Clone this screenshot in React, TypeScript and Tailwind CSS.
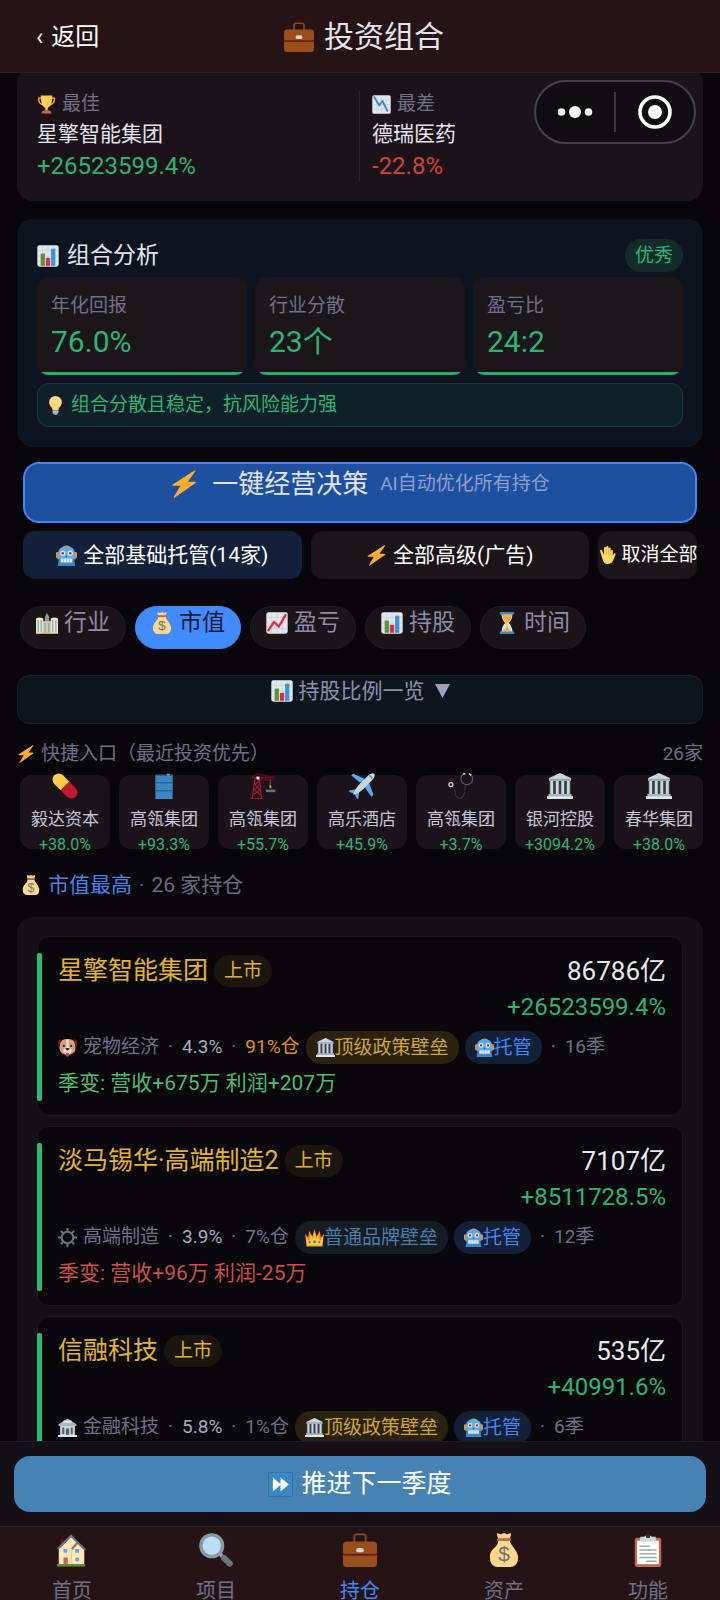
import React from "react";

type IconName =
  | "briefcase" | "trophy" | "chartDown" | "chartUp" | "barChart" | "bulb" | "bolt" | "robot" | "hand"
  | "city" | "moneyBag" | "hourglass" | "pill" | "barrel" | "crane" | "plane" | "stethoscope" | "bank"
  | "dog" | "gear" | "bankSmall" | "crown" | "forward" | "house" | "search" | "clipboard";

const grid = (
  <>
    <rect x="0.5" y="0.5" width="35" height="35" rx="3.5" fill="#e1e8ed" />
    <path d="M9 1v34M18 1v34M27 1v34M1 9h34M1 18h34M1 27h34" stroke="#bfccd4" strokeWidth="1" />
  </>
);

const art: Record<IconName, React.ReactNode> = {
  briefcase: (
    <>
      <path d="M12 10V4a2.500 2.500 0 0 1 2.500-2.500h7A2.500 2.500 0 0 1 24 4v6" fill="none" stroke="#8a4b1c" strokeWidth="2" />
      <rect x="0" y="9" width="36" height="27" rx="4" fill="#9a4e1c" />
      <path d="M0 20v2.500q0 1.500 3 1.500h30q3 0 3-1.500V20q0 2-3 2H3q-3 0-3-2z" fill="#662113" />
      <rect x="14" y="16" width="8" height="4.500" rx="2" fill="#d9d6cf" />
    </>
  ),
  trophy: (
    <>
      <path d="M9 6H3Q2 16 12 19M27 6h6q1 10-9 13" fill="none" stroke="#ffac33" strokeWidth="2.600" />
      <path d="M7 1h22q0 20-8 23-1 1-1 5h-4q0-4-1-5Q7 21 7 1z" fill="#ffcc4d" />
      <path d="M11 3h3q0 12 3 18-6-5-6-18z" fill="#ffe08a" />
      <path d="M11 30q7-3 14 0l3 5H8z" fill="#c1694f" />
    </>
  ),
  chartDown: (
    <>
      {grid}
      <path d="M4 4l10 16 6-9 9 19" fill="none" stroke="#3b88c3" strokeWidth="3.500" strokeLinejoin="round" strokeLinecap="round" />
    </>
  ),
  chartUp: (
    <>
      {grid}
      <path d="M4 30l9-14 8 8L32 5" fill="none" stroke="#dd2e44" strokeWidth="3.800" strokeLinejoin="round" strokeLinecap="round" />
    </>
  ),
  barChart: (
    <>
      {grid}
      <rect x="6" y="14" width="7" height="20" fill="#5c913b" />
      <rect x="14.500" y="21" width="7" height="13" fill="#dd2e44" />
      <rect x="23" y="6" width="7" height="28" fill="#3b94d9" />
    </>
  ),
  bulb: (
    <>
      <path d="M18 0a12 12 0 0 0-12 12c0 7 6 9 6.500 15h11c.5-6 6.500-8 6.500-15A12 12 0 0 0 18 0z" fill="#ffd983" />
      <path d="M15 26l-2-11 5 3 5-3-2 11" fill="none" stroke="#ffcc4d" strokeWidth="1.500" />
      <path d="M12.500 27h11v5q-2 4-5.500 4t-5.500-4z" fill="#99aab5" />
      <path d="M12.500 30h11" stroke="#ccd6dd" strokeWidth="1.500" />
    </>
  ),
  bolt: <path d="M31.500 .5L3.500 18.500q-1.800 1.800 1 1.800h9L5 34.500q-.6 1.800 1.200.8L32.500 17q1.800-1.900-1-1.900h-8.500L32.500 1.500q.4-1.700-1-1z" fill="#ffac33" />,
  robot: (
    <>
      <rect x="0" y="12" width="5" height="11" rx="2" fill="#f4900c" />
      <rect x="31" y="12" width="5" height="11" rx="2" fill="#f4900c" />
      <path d="M9 5q9-8 18 0z" fill="#f4900c" />
      <path d="M4 12Q5 3 18 3t14 9l1 13H3z" fill="#55acee" />
      <path d="M5 24h26l2 12H3z" fill="#3b88c3" />
      <circle cx="11.500" cy="14" r="4.500" fill="#e1e8ed" />
      <circle cx="24.500" cy="14" r="4.500" fill="#e1e8ed" />
      <circle cx="11.500" cy="14" r="2.200" fill="#be1931" />
      <circle cx="24.500" cy="14" r="2.200" fill="#be1931" />
      <path d="M16 21l2-3 2 3z" fill="#226699" />
      <rect x="8" y="23" width="20" height="7" rx="1" fill="#e1e8ed" />
      <path d="M13 23v7M18 23v7M23 23v7" stroke="#99aab5" strokeWidth="1" />
    </>
  ),
  hand: (
    <>
      <path d="M4 9.500q0-2 2-2t2.500 2L12 19V4q0-2.200 2.200-2.200T16.400 4V2.500Q16.400 0 18.800 0t2.300 2.500V5q.2-2 2.200-2t2.200 2.200V10q.2-1.800 2-1.800t2.200 2.300V20l1-3q1-3 3.500-2.500 1.500.5.8 3L31 27q-3 9-12 9-8 0-10-10z" fill="#ffdc5d" />
      <path d="M16.500 5v12M21 5v12M25.500 9v9" stroke="#ef9645" strokeWidth="1.200" />
    </>
  ),
  city: (
    <>
      <path d="M14.500 35V9q0-3 2-4l1-3h1l1 3q2 1 2 4v26z" fill="#8899a6" />
      <path d="M0 35V12q0-3 6-3t6 3v23zM24 35V12q0-3 6-3t6 3v23z" fill="#ffe8b6" />
      <rect x="11" y="15" width="14" height="20" fill="#e0c79c" />
      <path d="M3.500 13v20M8.500 13v20M27.500 13v20M32.500 13v20M15 18v15M21 18v15" stroke="#55acee" strokeWidth="2" />
      <path d="M0 35h36" stroke="#c9a67a" strokeWidth="2" />
    </>
  ),
  moneyBag: (
    <>
      <path d="M11 0l3.500 1.500L18 0l3.500 1.500L25 0q1 2-1 6H12q-2-4-1-6zM12 8h12q1 4 4.500 8t4.500 9q0 11-8 11H11q-8 0-8-11 0-5 4.500-9T12 8z" fill="#fdd888" />
      <rect x="10.500" y="5.500" width="15" height="2.600" rx="1.300" fill="#bf6952" />
      <text x="18" y="30" textAnchor="middle" fontFamily="Liberation Sans, sans-serif" fontSize="22" fontWeight="400" fill="#67757f">$</text>
    </>
  ),
  hourglass: (
    <>
      <path d="M9 3h18q0 9-6 15 6 6 6 15H9q0-9 6-15Q9 12 9 3z" fill="#dbe7ee" />
      <path d="M10 5h16q-1 8-7 13v6l6 8H11l6-8v-6Q11 13 10 5z" fill="#ffac33" />
      <rect x="6" y="0" width="24" height="4" rx="1.500" fill="#3b88c3" />
      <rect x="6" y="32" width="24" height="4" rx="1.500" fill="#3b88c3" />
    </>
  ),
  pill: (
    <g transform="rotate(45 18 18)">
      <path d="M18 9.500H5.500a8.500 8.500 0 0 0 0 17H18z" fill="#ffcc4d" />
      <path d="M18 9.500h12.500a8.500 8.500 0 0 1 0 17H18z" fill="#be1931" />
    </g>
  ),
  barrel: (
    <>
      <path d="M6 3h24v33H6z" fill="#3b88c3" />
      <path d="M6 3h24M6 13.500h24M6 24.500h24" stroke="#226699" strokeWidth="2" />
      <rect x="22" y="1" width="4" height="2.500" fill="#8899a6" />
    </>
  ),
  crane: (
    <>
      <path d="M3 36L7 7h6l3 29M5 30l9-7M14 30L6 23l7-7M13 23l-6-7 6-6M1 35.500h17" fill="none" stroke="#be1931" strokeWidth="1.400" />
      <path d="M2 6l8-5 24 5H2M12 9.500h22M14 9.500l3-3.500 3 3.500 3-3.500 3 3.500 3-3.500 3 3.500" fill="none" stroke="#a0041e" strokeWidth="1" />
      <path d="M28 9v12" stroke="#66757f" strokeWidth="1" />
      <rect x="27" y="17" width="2.500" height="4" fill="#f4900c" />
      <rect x="22" y="23" width="13" height="3.500" fill="#66757f" />
      <rect x="9" y="5" width="4" height="4" fill="#e1e8ed" />
    </>
  ),
  plane: (
    <>
      <path d="M15 13L3 3 6 1l20 9zM22 20l9 13 3-3-8-21z" fill="#55acee" />
      <path d="M9 23l-8 1-1 2 8 3 3 7 2-1 1-8z" fill="#55acee" />
      <path d="M6 30q2-8 9-15L27 3q6-4 8-2 2 2-2 8L21 21q-7 7-15 9z" fill="#ccd6dd" />
      <path d="M28 4q3 0 4 4" fill="none" stroke="#3b88c3" strokeWidth="2" />
    </>
  ),
  stethoscope: (
    <>
      <path d="M4 18q5 1 6 10 1 7 6 7t7-8l1-11" fill="none" stroke="#343b40" strokeWidth="1.500" />
      <path d="M23 1q-5 1-5 7 0 7 7 8 9 0 9-8 0-5-4-7" fill="none" stroke="#55626b" strokeWidth="1.500" />
      <circle cx="4" cy="16" r="2.800" fill="none" stroke="#ccd6dd" strokeWidth="1.800" />
      <path d="M21 1h3M29 1l3 2" stroke="#e1e8ed" strokeWidth="2" />
    </>
  ),
  bank: (
    <>
      <rect x="3" y="10" width="30" height="22" fill="#33404a" />
      <path d="M18 0L33 7v4H3V7z" fill="#ccd6dd" />
      <path d="M3 8h30v3H3z" fill="#99aab5" />
      <path d="M6.500 11v19M14.200 11v19M21.800 11v19M29.500 11v19" stroke="#ccd6dd" strokeWidth="4" />
      <path d="M2 29h32v3H2z" fill="#aab8c2" />
      <path d="M0 32h36v4H0z" fill="#e1e8ed" />
    </>
  ),
  bankSmall: (
    <>
      <path d="M4 13h28v22H4z" fill="#ccd6dd" />
      <path d="M18 1l17 11v3H1v-3z" fill="#aab8c2" />
      <path d="M10 5h16v4H10z" fill="#e1e8ed" />
      <path d="M8 18h4v13H8zM24 18h4v13h-4zM15 20h6v14h-6z" fill="#55636e" />
      <path d="M0 32h36v4H0z" fill="#e1e8ed" />
    </>
  ),
  dog: (
    <>
      <path d="M7 3Q0 1 0 11q0 8 5 11zM29 3q7-2 7 8 0 8-5 11z" fill="#662113" />
      <path d="M4 12Q5 2 18 2t14 10l1 9q-2 11-15 11T3 21z" fill="#d99e82" />
      <path d="M15 3h6l-1 14q6 3 6 9-3 6-8 6t-8-6q0-6 6-9z" fill="#f5d8c3" />
      <circle cx="11" cy="15" r="2.200" fill="#292f33" />
      <circle cx="25" cy="15" r="2.200" fill="#292f33" />
      <path d="M14 19h8q0 3-4 5-4-2-4-5z" fill="#292f33" />
      <path d="M15 29h6v4q-3 5-6 0z" fill="#dd2e44" />
    </>
  ),
  gear: (
    <>
      <circle cx="18" cy="18" r="11" fill="none" stroke="#66757f" strokeWidth="4" />
      <path d="M18 0v6M18 30v6M0 18h6M30 18h6M5.500 5.500l4 4M26.500 26.500l4 4M5.500 30.500l4-4M26.500 9.500l4-4" stroke="#66757f" strokeWidth="4" />
    </>
  ),
  crown: (
    <>
      <path d="M3 34L0 11l6 7L8 5l6 11 4-14 4 14 6-11 2 13 6-7-3 23z" fill="#f4900c" />
      <path d="M4 34L2 17l6 8 3-12 4 9 3-15 3 15 4-9 3 12 6-8-2 17z" fill="#ffcc4d" />
      <circle cx="18" cy="26" r="3" fill="#5c913b" />
      <circle cx="9" cy="27" r="2.200" fill="#9266cc" />
      <circle cx="27" cy="27" r="2.200" fill="#9266cc" />
      <path d="M3 32h30v3H3z" fill="#ffac33" />
    </>
  ),
  forward: (
    <>
      <rect x="0.500" y="0.500" width="35" height="35" rx="3.500" fill="#3b88c3" stroke="#2c6795" />
      <path d="M7 8l12 10L7 28zM18 8l12 10-12 10z" fill="#fff" />
    </>
  ),
  house: (
    <>
      <path d="M6 7h3v9H6z" fill="#a0041e" />
      <path d="M4 17L17 4l7 6 7 7v16H4z" fill="#ffe8b6" />
      <path d="M3 17L17 3l7 7M18 17l6-7 8 8" fill="none" stroke="#66757f" strokeWidth="2.200" />
      <path d="M17.500 18v15" stroke="#ffcc4d" strokeWidth="1" />
      <path d="M9 17h4v4H9zM21.500 17h4v4h-4zM21.500 26h4v4h-4z" fill="#55acee" />
      <rect x="9" y="26" width="4.500" height="7" fill="#c1694f" />
      <rect x="2" y="33" width="30" height="2.500" fill="#5c913b" />
    </>
  ),
  search: (
    <>
      <path d="M22 22l4 4" stroke="#99aab5" strokeWidth="4" />
      <path d="M26.500 26.500l6 6" stroke="#66757f" strokeWidth="6.500" strokeLinecap="round" />
      <circle cx="13.500" cy="13.500" r="11.500" fill="#bbddf5" stroke="#8899a6" strokeWidth="3.600" />
    </>
  ),
  clipboard: (
    <>
      <rect x="4" y="5" width="28" height="31" rx="2.500" fill="#c1694f" />
      <rect x="6.500" y="8" width="23" height="25" fill="#fff" />
      <path d="M10 4h4q1-2 4-2t4 2h4l1 5H9z" fill="#ccd6dd" />
      <circle cx="18" cy="3" r="2.500" fill="#292f33" />
      <path d="M9 14h11M9 18h18M9 22h18M9 26h18M16 30h11" stroke="#99aab5" strokeWidth="1.600" />
    </>
  ),
};

function Icon({ name, className }: { name: IconName; className: string }) {
  return (
    <svg viewBox="0 0 36 36" className={`shrink-0 ${className}`} aria-hidden="true">
      {art[name]}
    </svg>
  );
}

const stats = [
  { label: "年化回报", value: "76.0%" },
  { label: "行业分散", value: "23个" },
  { label: "盈亏比", value: "24:2" },
];

const sorts: { icon: IconName; label: string }[] = [
  { icon: "city", label: "行业" },
  { icon: "moneyBag", label: "市值" },
  { icon: "chartUp", label: "盈亏" },
  { icon: "barChart", label: "持股" },
  { icon: "hourglass", label: "时间" },
];

const quick: { icon: IconName; name: string; change: string }[] = [
  { icon: "pill", name: "毅达资本", change: "+38.0%" },
  { icon: "barrel", name: "高瓴集团", change: "+93.3%" },
  { icon: "crane", name: "高瓴集团", change: "+55.7%" },
  { icon: "plane", name: "高乐酒店", change: "+45.9%" },
  { icon: "stethoscope", name: "高瓴集团", change: "+3.7%" },
  { icon: "bank", name: "银河控股", change: "+3094.2%" },
  { icon: "bank", name: "春华集团", change: "+38.0%" },
];

type Holding = {
  name: string;
  value: string;
  change: string;
  icon: IconName;
  sector: string;
  share: string;
  position: string;
  heavy?: boolean;
  moatIcon: IconName;
  moat: string;
  topMoat: boolean;
  age: string;
  quarter?: string;
  up?: boolean;
};

const holdings: Holding[] = [
  { name: "星擎智能集团", value: "86786亿", change: "+26523599.4%", icon: "dog", sector: "宠物经济", share: "4.3%", position: "91%仓", heavy: true, moatIcon: "bank", moat: "顶级政策壁垒", topMoat: true, age: "16季", quarter: "季变: 营收+675万 利润+207万", up: true },
  { name: "淡马锡华·高端制造2", value: "7107亿", change: "+8511728.5%", icon: "gear", sector: "高端制造", share: "3.9%", position: "7%仓", moatIcon: "crown", moat: "普通品牌壁垒", topMoat: false, age: "12季", quarter: "季变: 营收+96万 利润-25万", up: false },
  { name: "信融科技", value: "535亿", change: "+40991.6%", icon: "bankSmall", sector: "金融科技", share: "5.8%", position: "1%仓", moatIcon: "bank", moat: "顶级政策壁垒", topMoat: true, age: "6季" },
];

const tabs: { icon: IconName; label: string }[] = [
  { icon: "house", label: "首页" },
  { icon: "search", label: "项目" },
  { icon: "briefcase", label: "持仓" },
  { icon: "moneyBag", label: "资产" },
  { icon: "clipboard", label: "功能" },
];

function Dot() {
  return <span className="w-[23px] text-center">·</span>;
}

function HoldingCard({ h }: { h: Holding }) {
  return (
    <li className="relative rounded-xl border border-[#191a25] bg-[#09070c] pt-4 pr-4 pb-3.5 pl-5">
      <span className="absolute top-4 bottom-3.5 -left-px w-[5px] rounded-xs bg-[#27bb77]" />
      <div className="flex items-center gap-1.5 leading-9">
        <h3 className="text-[25px] text-[#e3b52b]">{h.name}</h3>
        <span className="rounded-2xl bg-[#1a160e] px-2.5 text-[19px] leading-8 text-[#e0b42c]">上市</span>
        <span className="ml-auto text-[26px] text-[#e8e8f2]">{h.value}</span>
      </div>
      <p className="text-right text-2xl leading-9 text-[#2bb573]">{h.change}</p>
      <div className="mt-1 flex items-center text-[19px] leading-9 whitespace-nowrap text-[#6f7088]">
        <Icon name={h.icon} className="mr-1.5 size-[19px]" />
        {h.sector}
        <Dot />
        <span className="text-[#a9aac0]">{h.share}</span>
        <Dot />
        <span className={h.heavy ? "text-[#e0912a]" : ""}>{h.position}</span>
        <span className={`ml-1.5 flex items-center rounded-2xl px-2.5 leading-[33px] ${h.topMoat ? "bg-[#2a220f] text-[#d0a732]" : "bg-[#141c24] text-[#4a7fac]"}`}>
          <Icon name={h.moatIcon} className="size-[19px]" />
          {h.moat}
        </span>
        <span className="ml-1.5 flex items-center rounded-2xl bg-[#132038] px-2.5 leading-[33px] text-[#4287f5]">
          <Icon name="robot" className="size-[19px]" />
          托管
        </span>
        <Dot />
        {h.age}
      </div>
      {h.quarter && (
        <p className={`text-[21px] leading-9 ${h.up ? "text-[#4dbd72]" : "text-[#cc4f4d]"}`}>{h.quarter}</p>
      )}
    </li>
  );
}

export default function App() {
  return (
    <div className="relative flex h-dvh flex-col overflow-hidden bg-[#08060b] font-['Roboto','Noto_Sans_CJK_SC',sans-serif] font-normal text-[#e4e4ee]">
      <header className="relative z-10 grid shrink-0 grid-cols-[1fr_auto_1fr] items-center border-b border-[#2a2026] bg-[#261315] pt-[15px] pr-7 pb-[13px] pl-9">
        <button className="flex items-center gap-2 justify-self-start text-2xl leading-11 text-white">
          <span>‹</span>返回
        </button>
        <h1 className="flex items-center gap-2.5 text-[30px] leading-11">
          <Icon name="briefcase" className="size-[30px]" />
          投资组合
        </h1>
      </header>

      <div className="absolute top-20 right-6 z-20 flex h-16 w-[162px] items-center rounded-full border-2 border-[#444245] bg-[#100d10]">
        <button aria-label="更多" className="flex flex-1 justify-center">
          <svg viewBox="0 0 36 12" className="h-3 w-9">
            <circle cx="4.500" cy="6" r="3.800" fill="#fff" />
            <circle cx="18" cy="6" r="6" fill="#fff" />
            <circle cx="31.500" cy="6" r="3.800" fill="#fff" />
          </svg>
        </button>
        <span className="h-10 w-0.5 bg-[#3a383b]" />
        <button aria-label="关闭" className="flex flex-1 justify-center">
          <svg viewBox="0 0 34 34" className="size-[34px]">
            <circle cx="17" cy="17" r="15" fill="none" stroke="#fff" strokeWidth="3.600" />
            <circle cx="17" cy="17" r="7" fill="#fff" />
          </svg>
        </button>
      </div>

      <main className="-mt-1.5 min-h-0 flex-1 overflow-y-auto px-[17px] [scrollbar-width:none]">
        <section className="flex rounded-2xl bg-[#1b1319] px-5 pt-[23px] pb-[19px]">
          <div className="w-1/2 border-r border-[#252330]">
            <p className="flex items-center gap-1.5 text-[19px] leading-7 text-[#6f7088]"><Icon name="trophy" className="size-[19px]" />最佳</p>
            <p className="text-[21px] leading-8">星擎智能集团</p>
            <p className="text-2xl leading-8 text-[#2bb573]">+26523599.4%</p>
          </div>
          <div className="w-1/2 pl-3">
            <p className="flex items-center gap-1.5 text-[19px] leading-7 text-[#6f7088]"><Icon name="chartDown" className="size-[19px]" />最差</p>
            <p className="text-[21px] leading-8">德瑞医药</p>
            <p className="text-2xl leading-8 text-[#d14436]">-22.8%</p>
          </div>
        </section>

        <section className="mt-[18px] rounded-2xl bg-[#0d1420] p-5">
          <div className="flex items-center justify-between">
            <h2 className="flex items-center gap-2 text-[23px] leading-[33px]"><Icon name="barChart" className="size-[22px]" />组合分析</h2>
            <span className="rounded-2xl bg-[#122c2c] px-2.5 text-[19px] leading-[33px] text-[#2bb573]">优秀</span>
          </div>
          <div className="mt-[5px] grid grid-cols-3 gap-2">
            {stats.map((s) => (
              <div key={s.label} className="overflow-hidden rounded-xl bg-[#1b161a]">
                <div className="px-3.5 pt-[13px] pb-2.5">
                  <p className="text-[19px] leading-8 text-[#6f7088]">{s.label}</p>
                  <p className="text-[30px] leading-10 text-[#2bb573]">{s.value}</p>
                </div>
                <div className="h-[3px] bg-[#27ae6c]" />
              </div>
            ))}
          </div>
          <p className="mt-2 flex items-center gap-1.5 rounded-xl border border-[#15403c] bg-[#102028] px-2 text-[19px] leading-[42px] text-[#2bb573]">
            <Icon name="bulb" className="size-[19px]" />组合分散且稳定，抗风险能力强
          </p>
        </section>

        <div className="mt-[15px] px-1.5">
          <button className="flex w-full items-start justify-center rounded-2xl border-2 border-[#4287f5] bg-[#1e50a0] pb-[17px] text-[26px] leading-10">
            <Icon name="bolt" className="mt-1.5 mr-3.5 size-7" />
            一键经营决策
            <span className="ml-3 text-[19px] text-[#8f9fc9]">AI自动优化所有持仓</span>
          </button>
          <div className="mt-2 flex gap-[9px] text-[21px] leading-[48px] text-white">
            <button className="flex min-w-0 flex-1 items-center justify-center gap-1.5 rounded-xl bg-[#132039] whitespace-nowrap"><Icon name="robot" className="size-[21px]" />全部基础托管(14家)</button>
            <button className="flex min-w-0 flex-1 items-center justify-center gap-1.5 rounded-xl bg-[#1b1419] whitespace-nowrap"><Icon name="bolt" className="size-[21px]" />全部高级(广告)</button>
            <button className="flex w-[99px] shrink-0 items-center justify-center gap-1.5 overflow-hidden rounded-xl bg-[#1b1419] text-[19px] whitespace-nowrap"><Icon name="hand" className="size-[18px]" />取消全部</button>
          </div>
        </div>

        <div className="mt-[27px] flex gap-[9px] px-[3px]">
          {sorts.map((s, i) => (
            <button
              key={s.label}
              className={`flex items-center gap-1.5 rounded-full border px-[15px] pb-[9px] text-[23px] leading-8 ${i === 1 ? "border-[#428bff] bg-[#428bff] text-[#101a30]" : "border-[#1f1c26] bg-[#1a1318] text-[#8c8ca6]"}`}
            >
              <Icon name={s.icon} className="size-[22px]" />
              {s.label}
            </button>
          ))}
        </div>

        <button className="mt-[26px] flex w-full items-center justify-center gap-1.5 rounded-xl border border-[#191d28] bg-[#0f151e] pb-[17px] text-[21px] leading-[30px] text-[#9090aa]">
          <Icon name="barChart" className="size-[22px]" />
          持股比例一览
          <svg viewBox="0 0 15 14" className="ml-1 h-3.5 w-[15px]" aria-hidden="true"><path d="M0 0h15L7.500 14z" fill="#a0a0bc" /></svg>
        </button>

        <div className="mt-4 flex items-center justify-between text-[19px] leading-7 text-[#6f7088]">
          <h2 className="flex items-center gap-1.5"><Icon name="bolt" className="size-[18px]" />快捷入口（最近投资优先）</h2>
          <span>26家</span>
        </div>

        <div className="mt-[5px] flex gap-[9px] overflow-hidden pt-0.5 pb-2 pl-[3px]">
          {quick.map((q, i) => (
            <button key={i} className="flex h-[74px] w-[90px] shrink-0 flex-col items-center rounded-xl bg-[#1b1319]">
              <Icon name={q.icon} className="-mt-0.5 size-[26px]" />
              <span className="mt-1.5 text-[17px] leading-7 text-[#c6c6da]">{q.name}</span>
              <span className="text-base leading-6 text-[#2bb573]">{q.change}</span>
            </button>
          ))}
        </div>

        <p className="mt-3 flex items-center gap-[7px] pl-1 text-[21px] leading-8 text-[#6b6b80]">
          <Icon name="moneyBag" className="size-5" />
          <span className="text-[#4285ec]">市值最高</span>
          <span>·</span>
          <span>26 家持仓</span>
        </p>

        <ul className="mt-4 flex flex-col gap-2.5 rounded-2xl bg-[#151016] px-5 pt-[19px] pb-5">
          {holdings.map((h) => <HoldingCard key={h.name} h={h} />)}
        </ul>
      </main>

      <div className="shrink-0 border-t border-[#1d1b28] bg-[#151016] px-3.5 py-3.5">
        <button className="flex w-full items-center justify-center gap-2 rounded-2xl bg-[#4682b4] text-[25px] leading-[56px] text-white">
          <Icon name="forward" className="size-[25px]" />
          推进下一季度
        </button>
      </div>
      <nav className="grid h-[74px] shrink-0 grid-cols-5 overflow-hidden border-t border-[#2a2028] bg-[#261315] pt-1.5">
        {tabs.map((t, i) => (
          <a key={t.label} href="#" className={`flex flex-col items-center gap-2 text-[20px] leading-8 ${i === 2 ? "text-[#4287f5]" : "text-[#6f7088]"}`}>
            <Icon name={t.icon} className="size-[34px]" />
            {t.label}
          </a>
        ))}
      </nav>
    </div>
  );
}
